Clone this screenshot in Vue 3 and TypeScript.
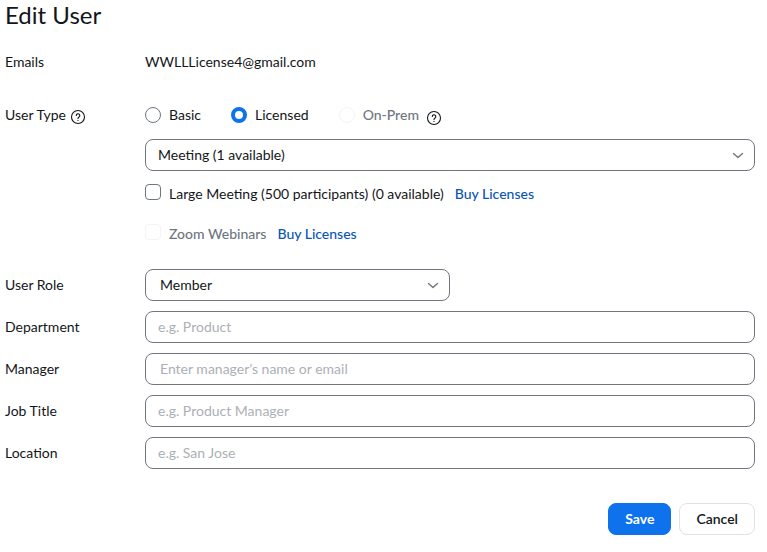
<script setup lang="ts">
import { ref } from 'vue'

interface TextField {
  id: string
  label: string
  placeholder: string
  picker?: boolean
}

const userType = ref('licensed')
const license = ref('meeting')
const largeMeeting = ref(false)
const role = ref('member')

const fields: TextField[] = [
  { id: 'department', label: 'Department', placeholder: 'e.g. Product' },
  { id: 'manager', label: 'Manager', placeholder: 'Enter manager’s name or email', picker: true },
  { id: 'job-title', label: 'Job Title', placeholder: 'e.g. Product Manager' },
  { id: 'location', label: 'Location', placeholder: 'e.g. San Jose' },
]
const values = ref<Record<string, string>>({})
</script>

<template>
  <form class="edit-user" @submit.prevent>
    <h1 class="title">Edit User</h1>

    <div class="row emails">
      <span class="label">Emails</span>
      <span>WWLLLicense4@gmail.com</span>
    </div>

    <div class="row type" role="radiogroup" aria-labelledby="type-label">
      <div class="label type-label">
        <span id="type-label">User Type</span>
        <svg class="help" viewBox="0 0 16 16" aria-hidden="true">
          <circle cx="8" cy="8" r="6.500" />
          <path d="M6.300 6.500a1.750 1.750 0 1 1 2.800 1.400C8.300 8.500 8 8.700 8 9.400" />
          <path d="M8 11.200v.2" />
        </svg>
      </div>
      <div class="type-content">
        <div class="radios">
          <label class="choice"><input v-model="userType" type="radio" name="type" value="basic" /><span>Basic</span></label>
          <label class="choice"><input v-model="userType" type="radio" name="type" value="licensed" /><span>Licensed</span></label>
          <div class="prem">
            <label class="choice muted"><input v-model="userType" type="radio" name="type" value="on-prem" disabled /><span>On-Prem</span></label>
            <svg class="help" viewBox="0 0 16 16" aria-hidden="true">
              <circle cx="8" cy="8" r="6.500" />
              <path d="M6.300 6.500a1.750 1.750 0 1 1 2.800 1.400C8.300 8.500 8 8.700 8 9.400" />
              <path d="M8 11.200v.2" />
            </svg>
          </div>
        </div>

        <div class="select">
          <select v-model="license" class="control" aria-label="License">
            <option value="meeting">Meeting (1 available)</option>
          </select>
          <svg class="chevron" viewBox="0 0 12 12" aria-hidden="true"><path d="M1.500 4.500 6 8.500l4.500-4" /></svg>
        </div>

        <div class="addons">
          <div class="addon">
            <label class="choice"><input v-model="largeMeeting" type="checkbox" /><span>Large Meeting (500 participants) (0 available)</span></label>
            <a href="#">Buy Licenses</a>
          </div>
          <div class="addon">
            <label class="choice muted"><input type="checkbox" disabled /><span>Zoom Webinars</span></label>
            <a href="#">Buy Licenses</a>
          </div>
        </div>
      </div>
    </div>

    <div class="fields">
      <div class="row">
        <label class="label" for="role">User Role</label>
        <div class="select half">
          <select id="role" v-model="role" class="control inset">
            <option value="member">Member</option>
          </select>
          <svg class="chevron" viewBox="0 0 12 12" aria-hidden="true"><path d="M1.500 4.500 6 8.500l4.500-4" /></svg>
        </div>
      </div>
      <div v-for="field in fields" :key="field.id" class="row">
        <label class="label" :for="field.id">{{ field.label }}</label>
        <input
          :id="field.id"
          v-model="values[field.id]"
          type="text"
          class="control text"
          :class="{ inset: field.picker }"
          :placeholder="field.placeholder"
        />
      </div>
    </div>

    <div class="actions">
      <button type="submit" class="button primary">Save</button>
      <button type="button" class="button">Cancel</button>
    </div>
  </form>
</template>

<style>
body {
  background: #fff;
}
</style>

<style scoped>
.edit-user {
  padding: 0 12px 16px 5px;
  color: #131619;
  font: 400 14px/20px Lato, 'Open Sans', sans-serif;
}
.title {
  margin: 0;
  font-size: 24px;
  font-weight: 400;
  line-height: 30px;
}
.row {
  display: grid;
  grid-template-columns: 140px minmax(0, 1fr);
  align-items: center;
}
.emails {
  margin-top: 22px;
}
.type {
  margin-top: 33px;
  align-items: start;
}
.type-label,
.prem {
  display: flex;
  align-items: flex-start;
}
.type-label {
  gap: 4px;
}
.prem {
  gap: 7px;
}
.help {
  width: 16px;
  height: 16px;
  padding-top: 4px;
  fill: none;
  stroke: #131619;
  stroke-width: 1.1;
  stroke-linecap: round;
}
.prem .help {
  padding-top: 5px;
}
.radios {
  display: flex;
  align-items: flex-start;
  gap: 30px;
}
.choice {
  display: flex;
  gap: 8px;
}
.muted {
  color: #6e7680;
  font-weight: 500;
}
.choice input {
  appearance: none;
  box-sizing: border-box;
  flex: none;
  width: 16px;
  height: 16px;
  margin: 0;
  border: 1px solid #6e7680;
  background: #fff;
}
.choice input[type='radio'] {
  align-self: center;
  border-radius: 50%;
}
.choice input[type='checkbox'] {
  border-radius: 4px;
}
.choice input[type='radio']:checked {
  border: 4px solid #0e72ed;
}
.choice input[type='checkbox']:checked {
  background: #0e72ed;
}
.choice input:disabled {
  border-color: #f3f4f5;
}
.select {
  display: grid;
  align-items: center;
}
.radios + .select {
  margin-top: 13px;
}
.select > * {
  grid-area: 1 / 1;
}
.half {
  width: 50%;
}
.control {
  appearance: none;
  box-sizing: border-box;
  width: 100%;
  height: 32px;
  margin: 0;
  padding: 0 12px;
  border: 1px solid #747480;
  border-radius: 8px;
  background: #fff;
  color: inherit;
  font: inherit;
}
.text {
  padding-bottom: 2px;
}
.inset {
  padding-left: 14px;
}
.control::placeholder {
  color: #acb0b5;
  opacity: 1;
}
.chevron {
  justify-self: end;
  width: 12px;
  height: 12px;
  margin-right: 11px;
  fill: none;
  stroke: #6e7680;
  stroke-width: 1.4;
  stroke-linecap: round;
  stroke-linejoin: round;
  pointer-events: none;
}
.addons {
  display: grid;
  gap: 20px;
  margin-top: 13px;
}
.addon {
  display: flex;
  gap: 11px;
}
a {
  color: #0956b5;
  font-weight: 500;
  text-decoration: none;
}
.fields {
  display: grid;
  gap: 10px;
  margin-top: 25px;
}
.actions {
  display: flex;
  justify-content: flex-end;
  gap: 8px;
  margin-top: 34px;
}
.button {
  height: 32px;
  padding: 0 16px;
  border: 1px solid #dfe3e8;
  border-radius: 8px;
  background: #fff;
  color: inherit;
  font: inherit;
  font-weight: 600;
}
.primary {
  border-color: #0e72ed;
  background: #0e72ed;
  color: #fff;
  font-weight: 700;
}
</style>
